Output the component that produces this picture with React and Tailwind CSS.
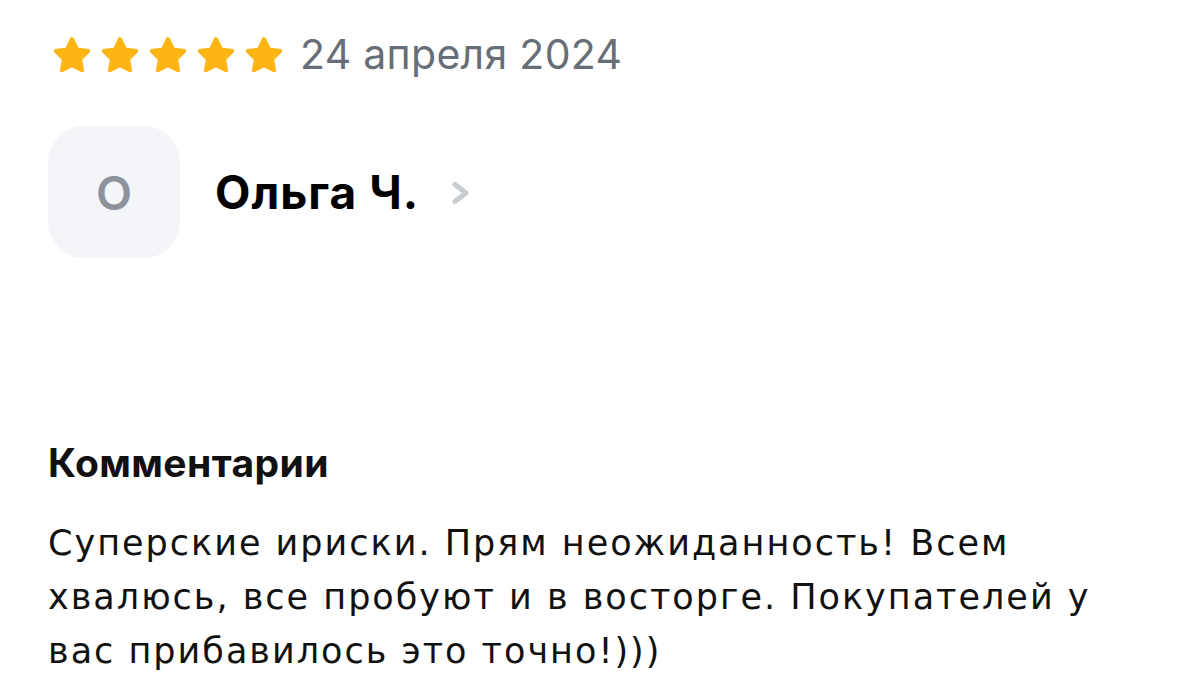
import React from 'react';

const Star = () => (
  <svg width="36" height="36" viewBox="2.3 1.6 19.4 19.4" className="shrink-0">
    <path
      d="M12 2.8l2.7 5.6 6.1.8-4.5 4.2 1.1 6.1L12 16.6l-5.4 2.9 1.1-6.1-4.5-4.2 6.1-.8z"
      fill="#FDB515"
      stroke="#FDB515"
      strokeWidth="2.2"
      strokeLinejoin="round"
    />
  </svg>
);

const App = () => {
  return (
    <div className="w-[1179px] h-[697px] bg-white overflow-hidden pl-12 font-['Inter',sans-serif]">
      <div className="flex items-center pt-[34px]">
        <div className="flex gap-3 ml-[6px]">
          {[0, 1, 2, 3, 4].map((i) => (
            <Star key={i} />
          ))}
        </div>
        <span className="ml-[18px] text-[41px] leading-none text-[#676e78] tracking-[0.3px]">24 апреля 2024</span>
      </div>

      <div className="flex items-center mt-[51px]">
        <div className="w-[132px] h-[132px] rounded-[36px] bg-[#f4f5f9] flex items-center justify-center">
          <span className="text-[47px] font-semibold text-[#8e939b] leading-none">О</span>
        </div>
        <span className="ml-[35px] text-[46px] font-bold text-black leading-none tracking-[1px]">Ольга Ч.</span>
        <svg width="20" height="24" viewBox="0 0 20 24" className="ml-[32px] mt-[2px]">
          <path d="M4 3.5l11 8.5-11 8.5" fill="none" stroke="#c8cbd0" strokeWidth="5" strokeLinecap="round" strokeLinejoin="round" />
        </svg>
      </div>

      <h2 className="mt-[185px] text-[39px] font-bold text-[#111] leading-none tracking-[0.4px]">Комментарии</h2>

      <p className="mt-[34px] font-['DejaVu_Sans',sans-serif] text-[35px] leading-[54px] text-[#111] tracking-[2px]">
        Суперские ириски. Прям неожиданность! Всем
        <br />
        хвалюсь, все пробуют и в восторге. Покупателей у
        <br />
        вас прибавилось это точно!)))
      </p>
    </div>
  );
};

export default App;
